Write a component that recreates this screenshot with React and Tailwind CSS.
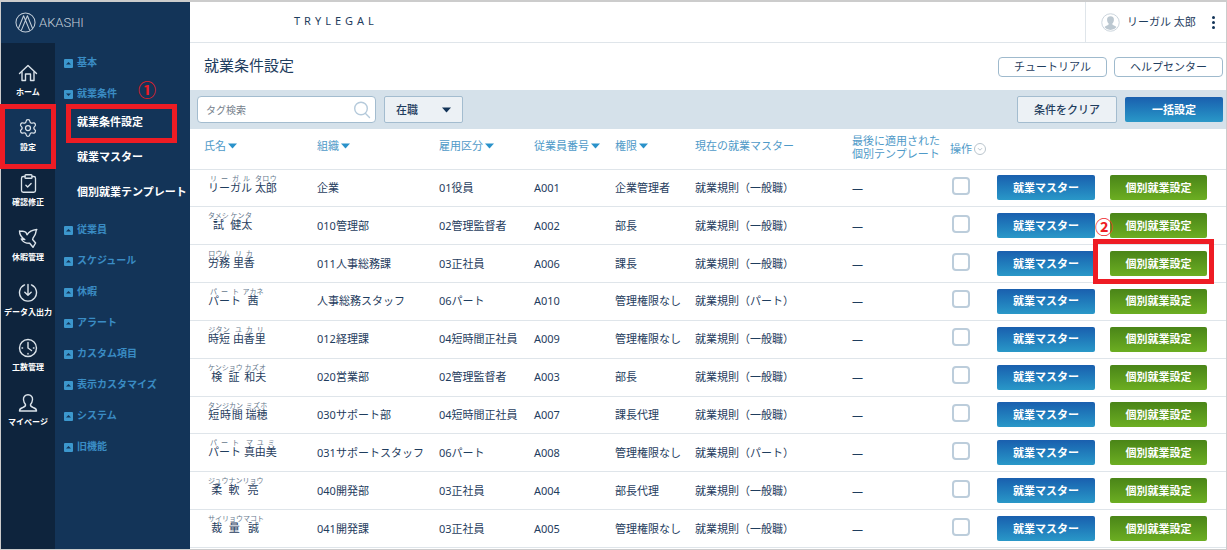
import { useState } from 'react';
import { ClipboardCheck, Settings } from 'lucide-react';

const HomeIcon = () => (
  <svg viewBox="0 0 20 20" className="w-5 h-5" fill="none" stroke="currentColor" strokeWidth="1.4" strokeLinejoin="round" strokeLinecap="round">
    <path d="M1.5 10.5 10 2.5l8.5 8" />
    <path d="M4 9v8.5h3.5V11h5v6.5H16V9" />
  </svg>
);

const BirdIcon = () => (
  <svg viewBox="0 0 20 20" className="w-5 h-5" fill="none" stroke="currentColor" strokeWidth="1.4" strokeLinejoin="round" strokeLinecap="round">
    <path d="M1.5 3C4 3.8 6 2.2 8 4.5l1 2.3C11 3.5 14 2 18.8 1.5c-1.3 1.5-.6 3.500-1.900 5.500-.9 1.600-2 2.600-2.300 4.500l3 3.500-2.600 4.300-3.300-4C8 15.300 4.500 13.500 3.300 11l3.500.6C3.500 9.500 1.500 6.500 1.500 3z" />
  </svg>
);

const DownloadIcon = () => (
  <svg viewBox="0 0 20 20" className="w-5 h-5" fill="none" stroke="currentColor" strokeWidth="1.4" strokeLinecap="round" strokeLinejoin="round">
    <path d="M6.5 1.9a8.5 8.5 0 1 0 7 0" />
    <path d="M10 1.5V12M6.8 9.2l3.2 3 3.2-3" />
  </svg>
);

const ClockIcon = () => (
  <svg viewBox="0 0 20 20" className="w-5 h-5" fill="none" stroke="currentColor" strokeWidth="1.4" strokeLinecap="round">
    <circle cx="10" cy="10" r="8.5" />
    <path d="M10 4.5V10l3.5 2.5M4 10h.6M15.4 10h.6M10 15.4v.6" />
  </svg>
);

const UserIcon = () => (
  <svg viewBox="0 0 20 20" className="w-5 h-5" fill="none" stroke="currentColor" strokeWidth="1.4" strokeLinejoin="round">
    <path d="M10 1.8c-3 0-4.8 2-4.5 5 .2 2 .9 3.5 2 4.7.3 1.8-.7 2.3-2.7 3C2.5 15.2 1.500 16 1.500 18h17c0-2-1-2.800-3.300-3.500-2-.7-3-1.200-2.700-3 1.100-1.200 1.800-2.700 2-4.700.3-3-1.500-5-4.500-5z" />
  </svg>
);

const LogoIcon = () => (
  <svg viewBox="0 0 22 22" className="w-[21px] h-[21px]" fill="none" stroke="currentColor" strokeWidth="1.1" strokeLinejoin="round">
    <circle cx="11" cy="11" r="10" />
    <path d="M3.5 17.5 9 4l6.5 15.5M18.5 17.5 13 4 6.5 19.5" />
  </svg>
);

const AvatarIcon = () => (
  <svg viewBox="0 0 20 20" className="w-[19px] h-[19px]">
    <circle cx="10" cy="10" r="9.2" fill="#fff" stroke="#c9d3db" />
    <path d="M10 3.5c-2.5 0-3.9 1.7-3.6 4 .2 1.6.8 2.8 1.7 3.6.1 1.5-.8 1.7-2.3 2.2-1 .4-1.8.8-2 1.7A8 8 0 0 0 10 18a8 8 0 0 0 6.2-3c-.2-.9-1-1.3-2-1.7-1.5-.5-2.4-.7-2.3-2.2.9-.8 1.5-2 1.7-3.6.3-2.3-1.1-4-3.6-4z" fill="#bcc8d1" />
  </svg>
);

const SearchIcon = () => (
  <svg viewBox="0 0 18 18" className="w-[18px] h-[18px] shrink-0 -mr-1" fill="none" stroke="#b5cadb" strokeWidth="1.4" strokeLinecap="round">
    <circle cx="8" cy="7.5" r="6.3" />
    <path d="m12.5 12.5 4 4" />
  </svg>
);

const SectionIcon = ({ open }) => (
  <svg viewBox="0 0 9 9" className="w-[9px] h-[9px] mt-[3px] shrink-0">
    <rect width="9" height="9" rx="1" fill="#3c97cd" />
    <path d={open ? 'M2 3.5h5L4.5 6z' : 'M2 5.5h5L4.5 3z'} fill="#133458" />
  </svg>
);

const SortIcon = () => (
  <svg viewBox="0 0 9 6" className="w-[9px] h-[6px]">
    <path d="M0 .5h9L4.5 5.5z" fill="#2a92ca" />
  </svg>
);

const railItems = [
  { label: 'ホーム', icon: <HomeIcon /> },
  { label: '設定', icon: <Settings size={20} strokeWidth={1.5} />, active: true },
  { label: '確認修正', icon: <ClipboardCheck size={21} strokeWidth={1.5} /> },
  { label: '休暇管理', icon: <BirdIcon /> },
  { label: 'データ入出力', icon: <DownloadIcon /> },
  { label: '工数管理', icon: <ClockIcon /> },
  { label: 'マイページ', icon: <UserIcon /> },
];

const sections = [
  { label: '基本' },
  { label: '就業条件', children: ['就業条件設定', '就業マスター', '個別就業テンプレート'] },
  { label: '従業員' },
  { label: 'スケジュール' },
  { label: '休暇' },
  { label: 'アラート' },
  { label: 'カスタム項目' },
  { label: '表示カスタマイズ' },
  { label: 'システム' },
  { label: '旧機能' },
];

const employees = [
  { id: 'A001', name: [['リーガル', 'リーガル'], ['太郎', 'タロウ']], org: '企業', type: '01役員', role: '企業管理者', rule: '就業規則（一般職）' },
  { id: 'A002', name: [['試', 'タメシ'], ['健太', 'ケンタ']], org: '010管理部', type: '02管理監督者', role: '部長', rule: '就業規則（一般職）' },
  { id: 'A006', name: [['労務', 'ロウム'], ['里香', 'リカ']], org: '011人事総務課', type: '03正社員', role: '課長', rule: '就業規則（一般職）', marked: true },
  { id: 'A010', name: [['パート', 'パート'], ['茜', 'アカネ']], org: '人事総務スタッフ', type: '06パート', role: '管理権限なし', rule: '就業規則（パート）' },
  { id: 'A009', name: [['時短', 'ジタン'], ['由香里', 'ユカリ']], org: '012経理課', type: '04短時間正社員', role: '管理権限なし', rule: '就業規則（一般職）' },
  { id: 'A003', name: [['検証', 'ケンショウ'], ['和夫', 'カズオ']], org: '020営業部', type: '02管理監督者', role: '部長', rule: '就業規則（一般職）' },
  { id: 'A007', name: [['短時間', 'タンジカン'], ['瑞穂', 'ミズホ']], org: '030サポート部', type: '04短時間正社員', role: '課長代理', rule: '就業規則（一般職）' },
  { id: 'A008', name: [['パート', 'パート'], ['真由美', 'マユミ']], org: '031サポートスタッフ', type: '06パート', role: '管理権限なし', rule: '就業規則（パート）' },
  { id: 'A004', name: [['柔軟', 'ジュウナン'], ['亮', 'リョウ']], org: '040開発部', type: '03正社員', role: '部長代理', rule: '就業規則（一般職）' },
  { id: 'A005', name: [['裁量', 'サイリョウ'], ['誠', 'マコト']], org: '041開発課', type: '03正社員', role: '管理権限なし', rule: '就業規則（一般職）' },
];

const columns = [
  { label: '氏名', width: 'w-[127px] pl-[14px]', sort: true },
  { label: '組織', width: 'w-[122px]', sort: true },
  { label: '雇用区分', width: 'w-[95px]', sort: true },
  { label: '従業員番号', width: 'w-[81px]', sort: true },
  { label: '権限', width: 'w-[80px]', sort: true },
  { label: '現在の就業マスター', width: 'w-[157px]' },
];

const blueButton = 'rounded-xs bg-linear-to-b from-[#1a5fae] to-[#2a98c8] text-white font-bold h-[25px] w-[98px] block';
const greenButton = 'rounded-xs bg-linear-to-b from-[#4a8518] to-[#6cae22] text-white font-bold h-[25px] w-[97px] block';
const outlineButton = 'rounded-sm border border-[#9fbacd] bg-white h-5 w-[109px] leading-none';

const Rail = () => (
  <nav className="w-[54px] shrink-0 bg-[#0e243d] pt-[11px]">
    {railItems.map((item) => (
      <a
        key={item.label}
        href="#"
        className={`relative flex flex-col items-center h-[55px] pt-[9px] text-[8px] leading-3 font-bold whitespace-nowrap text-white ${item.active ? 'bg-[#133458]' : ''}`}
      >
        <span className="h-5 mb-[3px] flex items-center text-[#dbe3ea]">{item.icon}</span>
        {item.label}
        {item.active && <span className="absolute z-10 -inset-x-px -inset-y-[5px] border-5 border-[#ee1c24]" />}
      </a>
    ))}
  </nav>
);

const SubMenu = () => (
  <nav className="flex-1 bg-[#133458] pt-[3px] pl-[9px]">
    {sections.map((section) => (
      <div key={section.label}>
        <a href="#" className="flex items-center gap-1 h-[31px] text-[10px] font-bold text-[#3a8cc4]">
          <SectionIcon open={!!section.children} />
          {section.label}
        </a>
        {section.children && (
          <ul className="-mt-1 mb-1 pl-[13px]">
            {section.children.map((child, i) => (
              <li key={child} className="relative flex items-center h-[35px] text-[11px] font-bold text-white whitespace-nowrap">
                <a href="#">{child}</a>
                {i === 0 && (
                  <>
                    <span className="absolute -left-[11px] right-[13px] top-0 h-[39px] border-5 border-[#ee1c24]" />
                    <span className="absolute left-[61px] -top-6 text-[18px] leading-5 text-[#ee1c24]">①</span>
                  </>
                )}
              </li>
            ))}
          </ul>
        )}
      </div>
    ))}
  </nav>
);

const EmployeeRow = ({ employee, checked, onToggle }) => (
  <tr className="h-[37px] border-t border-[#dfe5ea]">
    <td className="pl-[18px] align-top pt-2.5">
      {employee.name.map(([base, kana], i) => (
        <span key={base}>
          {i > 0 && ' '}
          <ruby>
            {base}
            <rt className="text-[7px] leading-[10px] text-[#66788c]">{kana}</rt>
          </ruby>
        </span>
      ))}
    </td>
    <td>{employee.org}</td>
    <td>{employee.type}</td>
    <td>{employee.id}</td>
    <td>{employee.role}</td>
    <td>{employee.rule}</td>
    <td>—</td>
    <td>
      <input
        type="checkbox"
        checked={checked}
        onChange={onToggle}
        aria-label={employee.id}
        className="appearance-none block w-[18px] h-[18px] mb-1 ml-0.5 rounded border-2 border-[#bccddb] bg-white checked:bg-[#2a92ca]"
      />
    </td>
    <td>
      <button type="button" className={blueButton}>就業マスター</button>
    </td>
    <td>
      <div className="relative w-[97px]">
        <button type="button" className={greenButton}>個別就業設定</button>
        {employee.marked && (
          <>
            <span className="absolute -left-[17px] -right-[7px] -top-3 h-[45px] border-5 border-[#ee1c24]" />
            <span className="absolute -left-[15px] -top-[34px] text-[18px] leading-5 font-bold text-[#ee1c24]">②</span>
          </>
        )}
      </div>
    </td>
  </tr>
);

const App = () => {
  const [selected, setSelected] = useState([]);
  const [keyword, setKeyword] = useState('');

  const toggle = (id) => {
    setSelected(selected.includes(id) ? selected.filter((s) => s !== id) : [...selected, id]);
  };

  return (
    <div className="min-h-screen flex border border-t-2 border-[#cccccc] bg-white text-[11px] leading-4 text-[#1f3d5e] font-['Noto_Sans','Noto_Sans_CJK_JP',sans-serif]">
      <aside className="w-[189px] shrink-0 flex flex-col">
        <div className="h-[41px] flex items-center gap-[3px] pl-3.5 bg-[#133458] text-[#c3ced9]">
          <LogoIcon />
          <span className="text-[13px] font-light font-['Roboto',sans-serif]">AKASHI</span>
        </div>
        <div className="flex flex-1">
          <Rail />
          <SubMenu />
        </div>
      </aside>

      <main className="flex-1 min-w-0 flex flex-col">
        <header className="h-[41px] flex items-center border-b border-[#dfe5ea]">
          <span className="ml-[104px] mb-0.5 tracking-[4px]">TRYLEGAL</span>
          <div className="ml-auto h-full w-[141px] flex items-center pl-[15px] border-l border-[#dfe5ea]">
            <AvatarIcon />
            <span className="ml-[7px]">リーガル 太郎</span>
            <button type="button" aria-label="メニュー" className="ml-auto mr-[11px]">
              <svg viewBox="0 0 3 13" className="w-[3px] h-[13px]" fill="#133458">
                <circle cx="1.5" cy="1.5" r="1.5" />
                <circle cx="1.5" cy="6.5" r="1.5" />
                <circle cx="1.5" cy="11.5" r="1.5" />
              </svg>
            </button>
          </div>
        </header>

        <div className="h-[47px] flex items-center gap-[7px] pl-3.5 pr-[3px]">
          <h1 className="mr-auto mb-1 text-[15px]">就業条件設定</h1>
          <button type="button" className={outlineButton}>チュートリアル</button>
          <button type="button" className={outlineButton}>ヘルプセンター</button>
        </div>

        <div className="h-[39px] flex items-center gap-2 pl-[7px] pr-[3px] bg-[#d5e1ea]">
          <label className="flex items-center w-[179px] h-[27px] px-2 rounded-sm border border-[#a3bccf] bg-white">
            <input
              type="text"
              value={keyword}
              onChange={(e) => setKeyword(e.target.value)}
              placeholder="タグ検索"
              aria-label="タグ検索"
              className="flex-1 min-w-0 text-[10px] outline-none placeholder:text-[#76818c]"
            />
            <SearchIcon />
          </label>
          <div className="relative">
            <select aria-label="在籍状況" className="appearance-none w-[79px] h-[27px] block pl-[11px] rounded-xs border border-[#a3bccf] bg-[#ecf1f5] font-medium">
              <option>在職</option>
              <option>休職</option>
              <option>退職</option>
            </select>
            <svg viewBox="0 0 9 6" className="absolute right-3 top-[11px] w-[9px] h-[6px] pointer-events-none">
              <path d="M0 .5h9L4.5 5.5z" fill="#133458" />
            </svg>
          </div>
          <button type="button" onClick={() => setKeyword('')} className="ml-auto w-[100px] h-[27px] rounded-xs border border-[#a3bccf] bg-[#ecf1f5] font-medium">
            条件をクリア
          </button>
          <button type="button" className={blueButton}>一括設定</button>
        </div>

        <div className="grid flex-1 pb-px">
          <table className="w-full table-fixed border-collapse border-b border-[#dfe5ea] text-left whitespace-nowrap">
            <thead>
              <tr className="h-10 text-[#4f9ac8]">
                {columns.map((col) => (
                  <th key={col.label} className={`font-normal pb-1.5 ${col.width}`}>
                    {col.sort ? (
                      <button type="button" className="flex items-center gap-0.5">
                        {col.label}
                        <SortIcon />
                      </button>
                    ) : (
                      col.label
                    )}
                  </th>
                ))}
                <th className="font-normal w-[98px] leading-[13px] pb-1">
                  最後に適用された
                  <br />
                  個別テンプレート
                </th>
                <th className="font-normal w-[47px]">
                  <span className="flex items-center gap-0.5">
                    操作
                    <svg viewBox="0 0 12 12" className="w-3 h-3 shrink-0" fill="none" stroke="#b9c4cc">
                      <circle cx="6" cy="6" r="5.5" />
                      <path d="m4 5.2 2 2 2-2" />
                    </svg>
                  </span>
                </th>
                <th className="w-[113px]" />
                <th className="w-[116px]" />
              </tr>
            </thead>
            <tbody>
              {employees.map((employee) => (
                <EmployeeRow
                  key={employee.id}
                  employee={employee}
                  checked={selected.includes(employee.id)}
                  onToggle={() => toggle(employee.id)}
                />
              ))}
            </tbody>
          </table>
        </div>
      </main>
    </div>
  );
};

export default App;
